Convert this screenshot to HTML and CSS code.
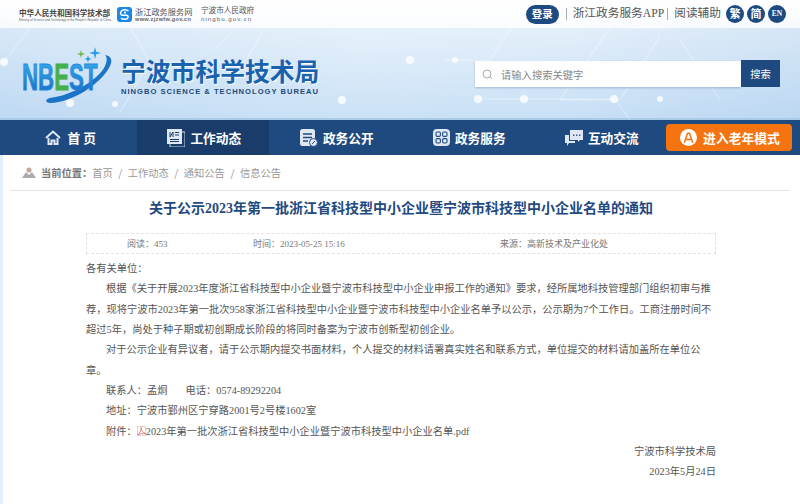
FILE: index.html
```html
<html>
<head>
<meta charset="utf-8">
<title>关于公示2023年第一批浙江省科技型中小企业暨宁波市科技型中小企业名单的通知</title>
<link rel="stylesheet" href="styles.css">
</head>

<body>

<div class="masthead">
<svg class="hex-bg" width="800" height="120" viewBox="0 0 800 120" fill="none" stroke="#fff" stroke-opacity=".45">
<path d="M4 62 L44 10 L120 10 L150 62 L120 112 M150 62 L245 62 M245 62 L270 20 L320 20 M260 0 L215 50 M445 60 L490 60 L530 0 M530 5 L600 5 L625 28 L670 28 L700 0 M610 28 L560 100 L620 100 L660 36 M478 99 L525 99 M525 99 L615 99 L630 120 M720 100 L680 40"/>
<g fill="#fff" stroke="none" fill-opacity=".8">
<circle cx="4" cy="62" r="4"/><circle cx="70" cy="103" r="4"/><circle cx="115" cy="104" r="3"/><circle cx="342" cy="100" r="4"/><circle cx="410" cy="60" r="4"/><circle cx="455" cy="60" r="3"/><circle cx="478" cy="99" r="4"/><circle cx="524" cy="99" r="4"/><circle cx="614" cy="99" r="4"/><circle cx="660" cy="99" r="3"/>
</g>
</svg>

<div class="top-bar">
<div class="top-links">
<div class="ministry">
<span class="ministry-cn">中华人民共和国科学技术部</span>
<span class="ministry-en">Ministry of Science and Technology of the People's Republic of China</span>
</div>
<div class="zj-link">
<svg width="15" height="15" viewBox="0 0 15 15"><rect width="15" height="15" rx="3" fill="#1b87e6"/><path d="M11.5 4 C9 1.8 4.5 2.4 3.6 5.4 C3 7.6 5 8.6 7.6 8.2 C10 7.9 11.6 8.6 11 10.4 C10.2 12.6 6.4 13 4 11.2" fill="none" stroke="#fff" stroke-width="1.5"/><circle cx="8" cy="5.6" r="1.1" fill="#fff"/></svg>
<div class="site-name">
<span class="site-cn">浙江政务服务网</span>
<span class="site-en">www.zjzwfw.gov.cn</span>
</div>
</div>
<div class="site-name">
<span class="site-cn narrow">宁波市人民政府</span>
<span class="site-en wide">ningbo.gov.cn</span>
</div>
</div>
<div class="top-tools">
<a class="login-btn">登录</a>
<span class="tool-link first">浙江政务服务APP</span>
<span class="tool-link">阅读辅助</span>
<span class="round-btn">繁</span>
<span class="round-btn">简</span>
<span class="round-btn en">EN</span>
</div>
</div>

<div class="brand-row">
<div class="brand">
<svg class="brand-logo" width="104" height="66" viewBox="0 0 104 66">
<defs>
<linearGradient id="logoBlue" x1="0" y1="0" x2="0" y2="1"><stop offset="0" stop-color="#35b2ee"/><stop offset="1" stop-color="#1668c4"/></linearGradient>
</defs>
<path d="M93 12 C99 13 101 17 98 23 C90 40 60 60 38 60 C33 60 33 56 38 55 C60 52 80 40 90 28 C95 21 96 15 93 12Z" fill="#1b74c8"/>
<path d="M83 4 l1.200 4.800 4.800 1.200 -4.800 1.200 -1.200 4.800 -1.200 -4.800 -4.800 -1.200 4.800 -1.200Z" fill="#2a9be8"/>
<path d="M76 12.500 l.9 2.600 2.600 .9 -2.600 .9 -.9 2.600 -.9 -2.600 -2.600 -.9 2.600 -.9Z" fill="#2a9be8"/>
<path d="M69 7 l.9 3.100 3.100 .9 -3.100 .9 -.9 3.100 -.9 -3.100 -3.100 -.9 3.100 -.9Z" fill="#6dbb3c"/>
<g transform="translate(10 47) scale(.62 1)">
<text class="logo-text" fill="url(#logoBlue)" stroke="#2a86d8" stroke-width=".8">NB<tspan fill="#46b04a" stroke="#46b04a">E</tspan>ST</text>
</g>
</svg>
<div class="brand-text">
<div class="brand-cn">宁波市科学技术局</div>
<div class="brand-en">NINGBO SCIENCE &amp; TECHNOLOGY BUREAU</div>
</div>
</div>
<form class="search">
<div class="search-box">
<svg width="11" height="11" viewBox="0 0 11 11" fill="none" stroke="#aaa" stroke-width="1"><circle cx="5" cy="5" r="4"/><path d="M8 8 L10 10"/></svg>
<span class="search-hint">请输入搜索关键字</span>
</div>
<button class="search-btn" type="button">搜索</button>
</form>
</div>
</div>

<div class="nav">
<a class="nav-item">
<svg width="16" height="15" viewBox="0 0 16 15" fill="none" stroke="#dfe8f2" stroke-width="2"><path d="M1 8 L8 1.5 L15 8"/><path d="M3.5 8 V14 H6.5 V10.5 H9.5 V14 H12.5 V8"/></svg>
<span class="nav-wide">首页</span>
</a>
<a class="nav-item active">
<svg width="18" height="18" viewBox="0 0 18 18"><rect x="3" y="3" width="15" height="15" fill="none" stroke="#cfdbe8"/><rect width="15" height="15" fill="#dfe8f2"/><path d="M3 3 V8 L6 3 V8 M8 3.5 H12 M8 6 H12 M3 10.5 H12 M3 12.5 H12" fill="none" stroke="#1c3f70"/></svg>
<span>工作动态</span>
</a>
<a class="nav-item">
<svg width="18" height="18" viewBox="0 0 18 18"><rect width="15" height="17" rx="2.5" fill="#dfe8f2"/><path d="M3 5 H12 M3 8.5 H12 M3 12 H8" stroke="#1f4a80" stroke-width="1.5"/><circle cx="13.5" cy="13.5" r="4" fill="#dfe8f2" stroke="#1f4a80"/><path d="M12 15 L15 12" stroke="#1f4a80"/></svg>
<span>政务公开</span>
</a>
<a class="nav-item">
<svg width="17" height="17" viewBox="0 0 17 17"><rect width="17" height="17" rx="4" fill="#dfe8f2"/><g fill="none" stroke="#1f4a80" stroke-width="1.1"><rect x="3" y="3" width="4.4" height="4.4" rx="1.2"/><rect x="9.6" y="3" width="4.4" height="4.4" rx="1.2"/><rect x="3" y="9.6" width="4.4" height="4.4" rx="1.2"/><rect x="9.6" y="9.6" width="4.4" height="4.4" rx="1.2"/></g></svg>
<span>政务服务</span>
</a>
<a class="nav-item">
<svg width="18" height="16" viewBox="0 0 18 16"><path d="M5 0 H18 V10 H15 L13 12 V10 H5Z" fill="#dfe8f2"/><path d="M0 5 H4 V11 H10 V13 H4 L2 16 V13 H0Z" fill="#dfe8f2"/><g fill="#1f4a80"><rect x="8" y="4.5" width="1.4" height="1.4"/><rect x="11" y="4.5" width="1.4" height="1.4"/><rect x="14" y="4.5" width="1.4" height="1.4"/></g></svg>
<span>互动交流</span>
</a>
<a class="elder-btn">
<svg width="17" height="17" viewBox="0 0 18 18"><circle cx="9" cy="9" r="9" fill="#fff"/><path d="M4.5 14.5 L8 4.5 H10 L13.500 14.5 M6 11 H12" fill="none" stroke="#f57410" stroke-width="1.6"/></svg>
<span>进入老年模式</span>
</a>
</div>

<div class="page">
<div class="crumbs">
<svg width="14" height="11" viewBox="0 0 14 11"><path d="M0 11 L4 5 L7 8 L10 5 L14 11Z" fill="#aaa"/><circle cx="7" cy="3" r="2.600" fill="#c4a9a0"/></svg>
<strong>当前位置&#65306;</strong>
<span>首页</span><i>/</i><span>工作动态</span><i>/</i><span>通知公告</span><i>/</i><span>信息公告</span>
</div>

<div class="article">
<h1 class="article-title">关于公示2023年第一批浙江省科技型中小企业暨宁波市科技型中小企业名单的通知</h1>
<div class="article-meta">
<span>阅读&#65306;453</span>
<span>时间&#65306;2023-05-25 15:16</span>
<span>来源&#65306;高新技术及产业化处</span>
</div>
<div class="article-body">
<p>各有关单位&#65306;</p>
<p class="indent">根据《关于开展2023年度浙江省科技型中小企业暨宁波市科技型中小企业申报工作的通知》要求&#65292;经所属地科技管理部门组织初审与推荐&#65292;现将宁波市2023年第一批次958家浙江省科技型中小企业暨宁波市科技型中小企业名单予以公示&#65292;公示期为7个工作日。工商注册时间不超过5年&#65292;尚处于种子期或初创期成长阶段的将同时备案为宁波市创新型初创企业。</p>
<p class="indent">对于公示企业有异议者&#65292;请于公示期内提交书面材料&#65292;个人提交的材料请署真实姓名和联系方式&#65292;单位提交的材料请加盖所在单位公章。</p>
<p class="indent">联系人&#65306;孟炯<span class="phone">电话&#65306;0574-89292204</span></p>
<p class="indent">地址&#65306;宁波市鄞州区宁穿路2001号2号楼1602室</p>
<p class="indent">附件&#65306;<svg class="pdf-icon" width="9" height="10" viewBox="0 0 9 10" fill="none" stroke="#d9534f" stroke-width=".7"><path d="M.5 .5 H8.500 V9.500 H.5Z" stroke="#e3b5b0"/><path d="M.5 9 C3 7 4.500 4 4 1.500 C4 4 6 7 8.500 7.500 C6 7 3 7.500 .5 9Z"/></svg>2023年第一批次浙江省科技型中小企业暨宁波市科技型中小企业名单.pdf</p>
<p class="sign">宁波市科学技术局</p>
<p class="sign">2023年5月24日</p>
</div>
</div>
</div>

</body>
</html>
```

FILE: styles.css
```css
* {
  margin: 0;
  padding: 0;
  box-sizing: border-box;
}

html, body {
  height: 504px;
  overflow: hidden;
}

body {
  background-color: #fff;
  font-family: "Liberation Serif", "Noto Sans CJK SC", serif;
  font-size: 10.25px;
  color: #555;
}

/* header */
.masthead {
  position: relative;
  height: 120px;
  background:
    linear-gradient(rgba(255, 255, 255, .35), rgba(170, 206, 240, .45)),
    linear-gradient(100deg, #cfe2f5 0%, #e6f1fb 45%, #e2eefa 70%, #cbdff3 100%);
  border-bottom: 2px solid #a9cbe8;
}
.hex-bg {
  position: absolute;
  left: 0;
  top: 0;
}

.top-bar {
  position: relative;
  height: 28px;
  display: flex;
  justify-content: space-between;
  align-items: center;
  background: linear-gradient(#fff, rgba(255, 255, 255, .78));
  padding: 0 14px 0 19px;
}
.top-links {
  display: flex;
  align-items: center;
  font-family: "Noto Sans CJK SC", sans-serif;
}
.ministry {
  display: flex;
  flex-direction: column;
  width: 98px;
  padding-top: 2px;
}
.ministry-cn {
  font-size: 7.6px;
  line-height: 10px;
  font-weight: 700;
  color: #444;
  white-space: nowrap;
}
.ministry-en {
  font-family: "Liberation Sans", sans-serif;
  font-size: 3px;
  line-height: 5px;
  color: #666;
  white-space: nowrap;
}
.zj-link {
  display: flex;
  align-items: center;
  gap: 3px;
  margin-right: 8px;
}
.site-name {
  display: flex;
  flex-direction: column;
  width: 58px;
  margin-top: -2px;
}
.zj-link .site-name {
  margin-top: 0;
}
.site-cn {
  font-size: 8.2px;
  line-height: 10px;
  color: #555;
  white-space: nowrap;
}
.site-cn.narrow {
  font-size: 7.6px;
}
.site-en {
  font-family: "Liberation Sans", sans-serif;
  font-size: 5.6px;
  line-height: 7px;
  font-weight: 700;
  color: #666;
  letter-spacing: .3px;
  white-space: nowrap;
}
.site-en.wide {
  font-weight: 400;
  font-size: 6.2px;
  letter-spacing: 1px;
}

.top-tools {
  display: flex;
  align-items: center;
  color: #555;
  font-size: 11.7px;
}
.login-btn {
  width: 33px;
  height: 19px;
  line-height: 19px;
  border-radius: 10px;
  background-color: #1d4a80;
  color: #fff;
  text-align: center;
  font-weight: 700;
  font-size: 10.5px;
  margin-right: 7px;
}
.tool-link {
  border-left: 1px solid #aaa;
  padding-left: 6px;
  margin-right: 3px;
  line-height: 12px;
  white-space: nowrap;
}
.tool-link + .tool-link {
  margin-right: 2px;
}
.round-btn {
  width: 18px;
  height: 18px;
  line-height: 18px;
  border-radius: 50%;
  background-color: #1d4a80;
  color: #fff;
  font-weight: 700;
  font-size: 11px;
  text-align: center;
  margin-left: 3px;
}
.round-btn.en {
  font-size: 7.5px;
}

.brand-row {
  position: relative;
  height: 90px;
  display: flex;
  justify-content: space-between;
  padding: 15px 20px 0 12px;
}
.brand {
  display: flex;
  align-items: flex-start;
}
.brand-text {
  margin: 12px 0 0 5px;
}
.brand-cn {
  font-family: "Noto Sans CJK SC", sans-serif;
  font-size: 24.8px;
  line-height: 30px;
  font-weight: 700;
  color: #1a62ad;
  white-space: nowrap;
  text-shadow: 1px 1px 1px #fff;
}
.brand-en {
  font-family: "Liberation Sans", sans-serif;
  font-size: 7.6px;
  line-height: 14px;
  font-weight: 700;
  color: #1d4a80;
  letter-spacing: 1px;
  white-space: nowrap;
}
.logo-text {
  font-family: "Liberation Sans", sans-serif;
  font-size: 36px;
  font-weight: 700;
}

.search {
  display: flex;
  margin-top: 17px;
  height: 27px;
}
.search-box {
  width: 266px;
  height: 26px;
  margin-top: 1px;
  display: flex;
  align-items: center;
  gap: 8px;
  padding-left: 7px;
  background-color: #fff;
  box-shadow: 0 1px 2px rgba(80, 120, 170, .4);
}
.search-hint {
  font-family: "Noto Sans CJK SC", sans-serif;
  font-size: 10.3px;
  color: #888;
}
.search-btn {
  width: 39px;
  border: 0;
  background-color: #1f4a80;
  color: #fff;
  font-family: "Noto Sans CJK SC", sans-serif;
  font-size: 10.3px;
}

/* nav */
.nav {
  height: 35px;
  display: flex;
  align-items: center;
  padding-left: 4px;
  background-color: #1f4a80;
}
.nav-item {
  width: 132.5px;
  height: 35px;
  display: flex;
  align-items: center;
  justify-content: center;
  gap: 5px;
  padding-left: 3px;
  color: #fff;
  font-family: "Noto Sans CJK SC", sans-serif;
  font-size: 12.7px;
  font-weight: 700;
}
.nav-item.active {
  background-color: #1a3c6b;
}
.nav-wide {
  letter-spacing: 3px;
  margin-left: 2px;
}
.elder-btn {
  width: 126px;
  height: 27px;
  margin-left: -1px;
  display: flex;
  align-items: center;
  justify-content: center;
  gap: 6px;
  padding-left: 3px;
  border-radius: 4px;
  background-color: #f57410;
  color: #fff;
  font-family: "Noto Sans CJK SC", sans-serif;
  font-size: 12.8px;
  font-weight: 700;
  white-space: nowrap;
}

/* article */
.page {
  padding: 0 10px 0 7px;
  height: 349px;
  border-left: 3px solid #e3eefb;
}
.crumbs {
  height: 36px;
  display: flex;
  align-items: center;
  padding-left: 12px;
  border-bottom: 1px solid #e6e6e6;
  color: #999;
  font-family: "Noto Sans CJK SC", sans-serif;
}
.crumbs strong {
  margin: 0 0 0 5px;
  color: #777;
}
.crumbs i {
  margin: 0 5.5px;
  font-style: normal;
}
.article {
  padding: 0 74px 0 76px;
}
.article-title {
  margin-top: 8px;
  font-size: 14px;
  line-height: 20px;
  font-weight: 700;
  color: #1f4a80;
  text-align: center;
  white-space: nowrap;
}
.article-meta {
  display: grid;
  grid-template-columns: 126px 247px 1fr;
  height: 21px;
  margin-top: 14px;
  align-items: center;
  padding-left: 40px;
  border: 1px dashed #e2e2e2;
  font-size: 9px;
  color: #777;
}
.article-body {
  margin-top: 5px;
  line-height: 20.35px;
  color: #555;
}
.indent {
  text-indent: 20px;
}
.phone {
  margin-left: 18px;
}
.sign {
  text-align: right;
}
.pdf-icon {
  vertical-align: -1px;
}
```
